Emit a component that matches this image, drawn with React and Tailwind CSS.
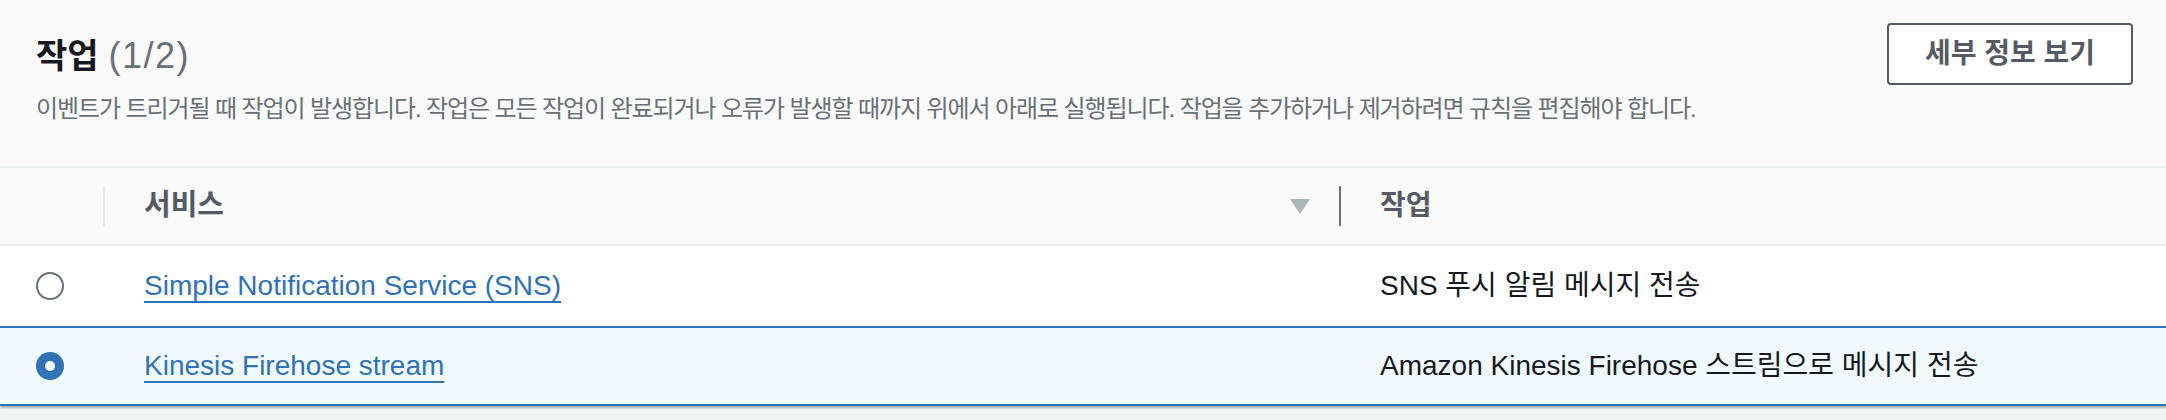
import React from 'react';

// 규칙 작업 목록 - 서비스 / 작업 테이블
const rows = [
  { id: 'sns', service: 'Simple Notification Service (SNS)', action: 'SNS 푸시 알림 메시지 전송' },
  { id: 'firehose', service: 'Kinesis Firehose stream', action: 'Amazon Kinesis Firehose 스트림으로 메시지 전송' },
];

function Radio({ checked }) {
  if (checked) {
    return (
      <span className="w-[28px] h-[28px] rounded-full bg-[#2f72b7] flex items-center justify-center">
        <span className="w-[10px] h-[10px] rounded-full bg-white" />
      </span>
    );
  }
  return <span className="w-[28px] h-[28px] rounded-full border-2 border-[#687078] bg-white" />;
}

export default function App() {
  const selected = 'firehose';

  return (
    <div className="min-h-[420px] bg-[#f2f3f3] font-['Liberation_Sans','Noto_Sans_CJK_KR',sans-serif] text-[#16191f]">
      <div className="bg-white shadow-[0_2px_2px_0_rgba(0,28,36,0.3)]">
        <header className="h-[168px] bg-[#fafafa] border-b-2 border-[#eaeded] flex justify-between pl-[36px] pr-[33px] pt-[23px]">
          <div className="pt-[11px]">
            <h2 className="flex items-baseline gap-[10px] leading-[44px]">
              <span className="text-[34px] font-bold">작업</span>
              <span className="text-[36px] text-[#687078] tracking-[1.5px]">(1/2)</span>
            </h2>
            <p className="mt-[16px] text-[24px] leading-[30px] text-[#687078] tracking-[-1.1px]">
              이벤트가 트리거될 때 작업이 발생합니다. 작업은 모든 작업이 완료되거나 오류가 발생할 때까지 위에서 아래로 실행됩니다. 작업을 추가하거나 제거하려면 규칙을 편집해야 합니다.
            </p>
          </div>
          <button className="w-[246px] h-[62px] border-2 border-[#545b64] rounded-[4px] bg-white text-[28px] font-bold text-[#545b64]">
            세부 정보 보기
          </button>
        </header>

        <div className="flex items-center h-[78px] bg-[#fafafa] border-b-2 border-[#eaeded]">
          <div className="w-[103px]" />
          <div className="w-[2px] h-[40px] bg-[#eaeded]" />
          <div className="w-[1234px] flex items-center justify-between pl-[39px] pr-[29px]">
            <span className="text-[29px] font-bold text-[#545b64]">서비스</span>
            <svg width="20" height="15" viewBox="0 0 20 15">
              <path d="M0 0 H20 L10 15 Z" fill="#aab7b8" />
            </svg>
          </div>
          <div className="w-[2px] h-[40px] bg-[#687078]" />
          <div className="pl-[39px] text-[28px] font-bold text-[#545b64]">작업</div>
        </div>

        {rows.map(r => {
          const isSel = r.id === selected;
          return (
            <div
              key={r.id}
              className={isSel
                ? 'flex items-center h-[80px] bg-[#f1faff] border-y-2 border-[#2f72b7]'
                : 'flex items-center h-[80px] bg-white'}
            >
              <div className="w-[103px] pl-[36px] flex items-center">
                <Radio checked={isSel} />
              </div>
              <div className="w-[1236px] pl-[41px]">
                <a href="#" className="text-[28px] text-[#2f72b7] underline decoration-2 underline-offset-[6px]">
                  {r.service}
                </a>
              </div>
              <div className="pl-[41px] text-[28px]">{r.action}</div>
            </div>
          );
        })}
      </div>
    </div>
  );
}
